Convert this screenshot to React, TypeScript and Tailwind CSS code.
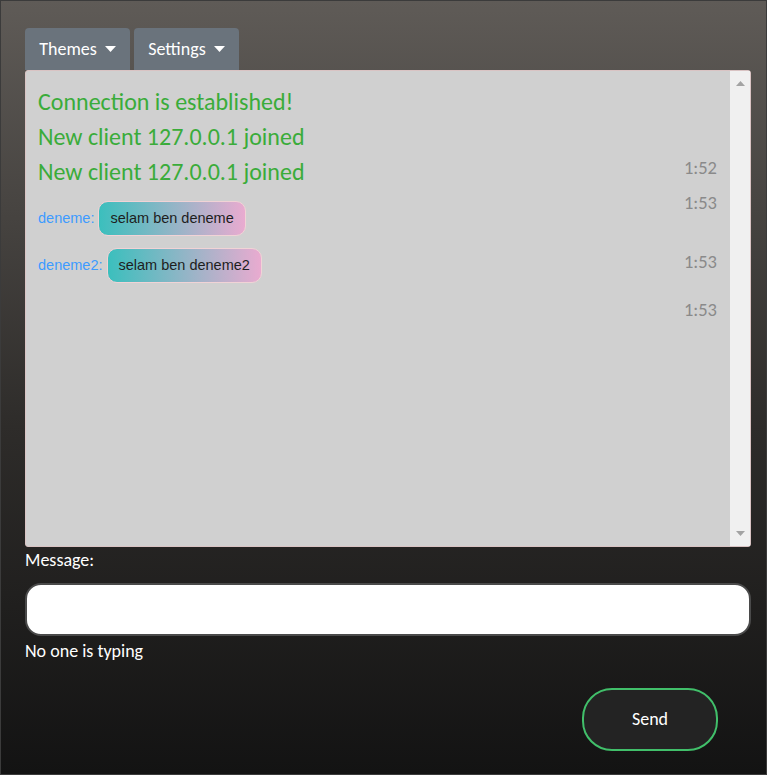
import React from "react";

const calibri = { fontFamily: 'Carlito, Lato, "Open Sans", sans-serif' };

function Caret() {
  return (
    <svg width="11" height="6" viewBox="0 0 11 6" className="ml-[8px]">
      <path d="M0 0 L11 0 L5.5 6 Z" fill="#ffffff" />
    </svg>
  );
}

function Bubble({ name, text }: { name: string; text: string }) {
  return (
    <div className="flex items-center gap-[4px]">
      <span
        className="text-[14.5px] text-[#3d9bff]"
        style={{ fontFamily: '"Liberation Sans", Arial, sans-serif' }}
      >
        {name}:
      </span>
      <span
        className="h-[35px] px-[11px] flex items-center rounded-[10px] border border-[#f1d3d6] bg-[linear-gradient(to_right,#3bbfbd,#e9abd0)] text-[14.5px] text-[#1e1e1e]"
        style={{ fontFamily: '"Liberation Sans", Arial, sans-serif' }}
      >
        {text}
      </span>
    </div>
  );
}

export default function App() {
  return (
    <div
      className="w-[767px] h-[775px] border border-[#3b3b3b] bg-[linear-gradient(to_bottom,#5f5b57,#2e2c2a_55%,#131313)] text-white overflow-hidden"
      style={calibri}
    >
      <div className="pl-[24px] pr-[15px] pt-[27px]">
        <div className="flex gap-[4px]">
          <button className="w-[105px] h-[42px] rounded-t-[4px] bg-[#6a737c] flex items-center justify-center text-[18px] text-white">
            Themes
            <Caret />
          </button>
          <button className="w-[105px] h-[42px] rounded-t-[4px] bg-[#6a737c] flex items-center justify-center text-[18px] text-white">
            Settings
            <Caret />
          </button>
        </div>
        <div className="h-[477px] rounded-[3px] border border-[#d9c3c3] bg-[#d0d0d0] flex">
          <div className="flex-1 flex justify-between pl-[12px] pr-[13px] pt-[13px]">
            <div className="flex flex-col">
              <div className="text-[24px] leading-[35px] text-[#3aac3a]">Connection is established!</div>
              <div className="text-[24px] leading-[35px] text-[#3aac3a]">New client 127.0.0.1 joined</div>
              <div className="text-[24px] leading-[35px] text-[#3aac3a]">New client 127.0.0.1 joined</div>
              <div className="mt-[12px] flex flex-col gap-[12px]">
                <Bubble name="deneme" text="selam ben deneme" />
                <Bubble name="deneme2" text="selam ben deneme2" />
              </div>
            </div>
            <div className="flex flex-col text-[18.5px] leading-[24px] text-[#8a8a8a]">
              <div className="mt-[72px]">1:52</div>
              <div className="mt-[11px]">1:53</div>
              <div className="mt-[35px]">1:53</div>
              <div className="mt-[24px]">1:53</div>
            </div>
          </div>
          <div className="w-[20px] bg-[#f0f0f0] flex flex-col justify-between items-center py-[10px]">
            <svg width="9" height="5" viewBox="0 0 9 5">
              <path d="M0 5 L9 5 L4.5 0 Z" fill="#a3a3a3" />
            </svg>
            <svg width="9" height="5" viewBox="0 0 9 5">
              <path d="M0 0 L9 0 L4.5 5 Z" fill="#a3a3a3" />
            </svg>
          </div>
        </div>
        <div className="mt-[1px] text-[18px] leading-[24px]">Message:</div>
        <input className="mt-[11px] w-full h-[53px] rounded-[16px] border-2 border-[#4a4a4a] bg-white outline-none" />
        <div className="mt-[3px] text-[18px] leading-[24px]">No one is typing</div>
        <div className="flex justify-end pr-[33px] mt-[25px]">
          <button className="w-[136px] h-[63px] rounded-[30px] border-2 border-[#41bf6a] bg-[#232323] text-[18px] text-white">
            Send
          </button>
        </div>
      </div>
    </div>
  );
}
